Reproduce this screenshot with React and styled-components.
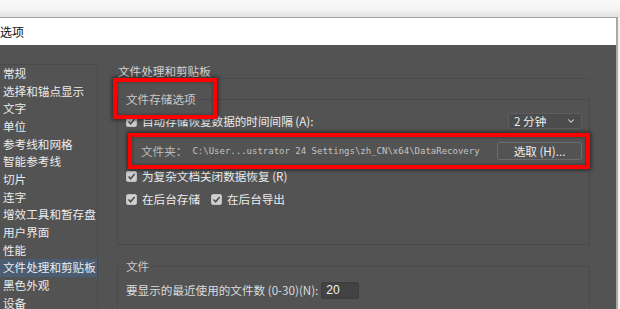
import React from "react";
import styled, { createGlobalStyle } from "styled-components";
import { ChevronDown } from "lucide-react";

const GlobalStyle = createGlobalStyle`
  html, body { margin: 0; padding: 0; background: #f1f1f1; overflow: hidden; }
  * { box-sizing: border-box; }
`;

const CJK = `"Noto Sans CJK SC", "Noto Sans", sans-serif`;

const Page = styled.div`
  position: relative;
  width: 620px;
  height: 309px;
  overflow: hidden;
  font-family: ${CJK};
  background: #f1f1f1;
`;

const TopShade = styled.div`
  height: 17px;
  background: linear-gradient(#f9f9f9 0%, #f4f4f4 55%, #e2e2e2 100%);
`;

const Window = styled.div`
  width: 618px;
  height: 292px;
  display: flex;
  flex-direction: column;
  border-top: 1px solid #a2a2a2;
  border-right: 2px solid #a9a9a9;
`;

const TitleBar = styled.div`
  height: 27px;
  flex: none;
  background: #ffffff;
  color: #111;
  font-size: 12px;
  line-height: 27px;
  padding-left: 0;
`;

const Body = styled.div`
  flex: 1;
  display: flex;
  background: #535353;
  min-height: 0;
`;

const Sidebar = styled.ul`
  list-style: none;
  margin: 19px 0 0 0;
  padding: 0;
  width: 98px;
  flex: none;
  border: 1px solid #4a4a4a;
  border-left: none;
  border-bottom: none;
  border-top-right-radius: 4px;
`;

const NavItem = styled.li`
  height: 17.67px;
  line-height: 17.67px;
  padding-left: 3px;
  font-size: 11.6px;
  color: #ececec;
  white-space: nowrap;
  background: ${(p) => (p.$active ? "#4a5d72" : "transparent")};
`;

const Content = styled.div`
  flex: 1;
  padding: 0 26px 0 19px;
  display: flex;
  flex-direction: column;
`;

const Heading = styled.div`
  margin-top: 19px;
  height: 16px;
  line-height: 14px;
  padding-left: 1px;
  font-size: 11.6px;
  color: #d2d2d2;
  border-bottom: 1px solid #4b4b4b;
`;

const Group = styled.fieldset`
  margin: ${(p) => p.$mt}px 0 0 0;
  padding: 0 7px ${(p) => p.$pb}px 8px;
  border: 1px solid #4a4a4a;
  border-radius: 2px;
  min-width: 0;
`;

const Legend = styled.legend`
  padding: 0 2px;
  margin-left: -2px;
  font-size: 11.6px;
  line-height: 16px;
  color: #c9c9c9;
`;

const Row = styled.div`
  display: flex;
  align-items: center;
  height: ${(p) => p.$h || 18}px;
  margin-top: ${(p) => p.$mt || 0}px;
  gap: ${(p) => p.$gap || 0}px;
`;

const Check = styled.label`
  display: inline-flex;
  align-items: center;
  gap: 5px;
  font-size: 11.6px;
  color: #ececec;
  white-space: nowrap;
`;

const Box = styled.span`
  width: 11px;
  height: 11px;
  border-radius: 2px;
  background: #cfcfcf;
  border: 1px solid #bdbdbd;
  display: inline-flex;
  align-items: center;
  justify-content: center;
`;

const Spacer = styled.div`
  flex: 1;
`;

const Select = styled.div`
  width: 74px;
  height: 16px;
  margin-right: 0;
  border: 1px solid #5e5e5e;
  border-radius: 3px;
  background: #4c4c4c;
  display: flex;
  align-items: center;
  justify-content: space-between;
  padding: 0 5px 0 5px;
  font-size: 11.6px;
  color: #ededed;
`;

const FolderLabel = styled.span`
  margin-left: 15px;
  font-size: 11.6px;
  color: #bcbcbc;
  white-space: nowrap;
`;

const Path = styled.span`
  margin-left: 5px;
  font-family: "DejaVu Sans Mono", "Liberation Mono", monospace;
  font-size: 9px;
  color: #c4c4c4;
  white-space: nowrap;
`;

const Button = styled.div`
  width: 85px;
  height: 18px;
  border: 1px solid #6c6c6c;
  border-radius: 2px;
  display: flex;
  align-items: center;
  justify-content: center;
  font-size: 11.6px;
  color: #ededed;
  white-space: nowrap;
`;

const FieldLabel = styled.span`
  font-size: 11.6px;
  color: #dcdcdc;
  white-space: nowrap;
`;

const NumberInput = styled.div`
  width: 38px;
  height: 17px;
  margin-left: 3px;
  background: #424242;
  border: 1px solid #3d3d3d;
  border-radius: 2px;
  padding-left: 4px;
  font-family: "Liberation Sans", sans-serif;
  font-size: 12px;
  line-height: 15px;
  color: #f2f2f2;
`;

const Highlight = styled.div`
  position: absolute;
  left: ${(p) => p.$x}px;
  top: ${(p) => p.$y}px;
  width: ${(p) => p.$w}px;
  height: ${(p) => p.$h}px;
  border: 4px solid #ff0000;
  box-shadow: 0 0 4px 1px rgba(0, 0, 0, 0.55), inset 0 0 3px rgba(0, 0, 0, 0.45);
  pointer-events: none;
`;

const CheckBox = ({ children }) => (
  <Check>
    <Box>
      <svg width="9" height="9" viewBox="0 0 9 9">
        <path d="M1.5 4.6 L3.6 6.8 L7.6 2" fill="none" stroke="#4a4a4a" strokeWidth="1.5" />
      </svg>
    </Box>
    {children}
  </Check>
);

const navItems = [
  "常规",
  "选择和锚点显示",
  "文字",
  "单位",
  "参考线和网格",
  "智能参考线",
  "切片",
  "连字",
  "增效工具和暂存盘",
  "用户界面",
  "性能",
  "文件处理和剪贴板",
  "黑色外观",
  "设备",
];

export default function App() {
  return (
    <>
      <GlobalStyle />
      <Page>
        <TopShade />
        <Window>
          <TitleBar>选项</TitleBar>
          <Body>
            <Sidebar>
              {navItems.map((n) => (
                <NavItem key={n} $active={n === "文件处理和剪贴板"}>
                  {n}
                </NavItem>
              ))}
            </Sidebar>
            <Content>
              <Heading>文件处理和剪贴板</Heading>
              <Group $mt={12} $pb={36}>
                <Legend>文件存储选项</Legend>
                <Row $mt={5}>
                  <CheckBox>自动存储恢复数据的时间间隔 (A):</CheckBox>
                  <Spacer />
                  <Select>
                    <span>2 分钟</span>
                    <ChevronDown size={10} strokeWidth={2.5} color="#e0e0e0" />
                  </Select>
                </Row>
                <Row $mt={11} $h={20}>
                  <FolderLabel>文件夹：</FolderLabel>
                  <Path>{"C:\\User...ustrator 24 Settings\\zh_CN\\x64\\DataRecovery"}</Path>
                  <Spacer />
                  <Button>选取 (H)...</Button>
                </Row>
                <Row $mt={6}>
                  <CheckBox>为复杂文档关闭数据恢复 (R)</CheckBox>
                </Row>
                <Row $mt={5} $gap={11}>
                  <CheckBox>在后台存储</CheckBox>
                  <CheckBox>在后台导出</CheckBox>
                </Row>
              </Group>
              <Group $mt={13} $pb={20}>
                <Legend>文件</Legend>
                <Row $mt={7}>
                  <FieldLabel>要显示的最近使用的文件数 (0-30)(N):</FieldLabel>
                  <NumberInput>20</NumberInput>
                </Row>
              </Group>
            </Content>
          </Body>
        </Window>
        <Highlight $x={113} $y={78} $w={104} $h={41} />
        <Highlight $x={128} $y={133} $w={462} $h={36} />
      </Page>
    </>
  );
}
